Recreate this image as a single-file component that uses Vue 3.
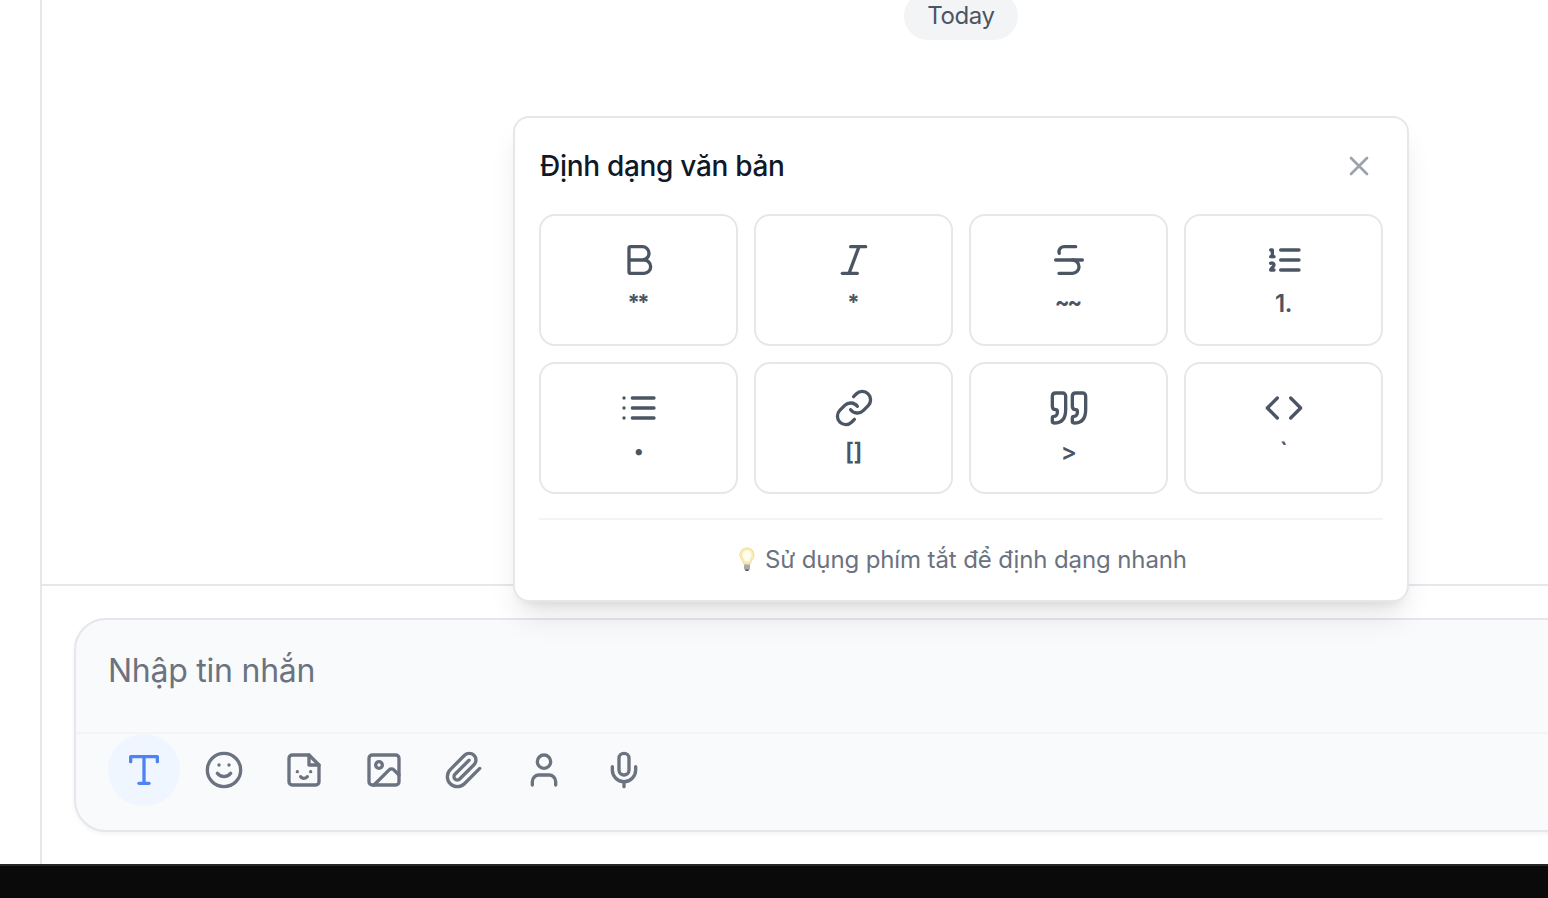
<script setup>
const formats = [
  { label: '**', tight: true, paths: ['M6 12h9a4 4 0 0 1 0 8H7a1 1 0 0 1-1-1V5a1 1 0 0 1 1-1h7a4 4 0 0 1 0 8'] },
  { label: '*', tight: true, paths: ['M19 4h-9', 'M14 20H5', 'M15 4L9 20'] },
  { label: '~~', tight: true, paths: ['M16 4H9a3 3 0 0 0-2.83 4', 'M14 12a4 4 0 0 1 0 8H6', 'M4 12h16'] },
  { label: '1.', paths: ['M10 6h11', 'M10 12h11', 'M10 18h11', 'M4 6h1v4', 'M4 10h2', 'M6 18H4c0-1 2-2 2-3s-1-1.5-2-1'] },
  { label: '•', dot: true, paths: ['M3 6h.01', 'M3 12h.01', 'M3 18h.01', 'M8 6h13', 'M8 12h13', 'M8 18h13'] },
  { label: '[]', paths: ['M10 13a5 5 0 0 0 7.54.54l3-3a5 5 0 0 0-7.07-7.07l-1.72 1.71', 'M14 11a5 5 0 0 0-7.54-.54l-3 3a5 5 0 0 0 7.07 7.07l1.71-1.71'] },
  { label: '>', paths: ['M3 21c3 0 7-1 7-8V5c0-1.25-.756-2.017-2-2H4c-1.25 0-2 .75-2 1.972V11c0 1.25.75 2 2 2 1 0 1 0 1 1v1c0 1-1 2-2 2s-1 .008-1 1.031V20c0 1 0 1 1 1z', 'M15 21c3 0 7-1 7-8V5c0-1.25-.757-2.017-2-2h-4c-1.25 0-2 .75-2 1.972V11c0 1.25.75 2 2 2 1 0 1 0 1 1v1c0 1-1 2-2 2s-1 .008-1 1.031V20c0 1 0 1 1 1z'] },
  { label: '`', paths: ['M16 18l6-6-6-6', 'M8 6l-6 6 6 6'] },
]
const tools = [
  { name: 'text', active: true, paths: ['M4 7V4h16v3', 'M9 20h6', 'M12 4v16'] },
  { name: 'emoji', paths: ['M22 12a10 10 0 1 1-20 0a10 10 0 1 1 20 0', 'M8 14s1.5 2 4 2 4-2 4-2', 'M9 9h.01', 'M15 9h.01'] },
  { name: 'sticker', paths: ['M15 3H5a2 2 0 0 0-2 2v14a2 2 0 0 0 2 2h14a2 2 0 0 0 2-2V9z', 'M15 3v6h6', 'M8 13h.01', 'M16 13h.01', 'M10 16s.8 1 2 1c1.3 0 2-1 2-1'] },
  { name: 'image', paths: ['M5 3h14a2 2 0 0 1 2 2v14a2 2 0 0 1-2 2H5a2 2 0 0 1-2-2V5a2 2 0 0 1 2-2z', 'M11 9a2 2 0 1 1-4 0a2 2 0 1 1 4 0', 'M21 15l-3.086-3.086a2 2 0 0 0-2.828 0L6 21'] },
  { name: 'file', paths: ['M21.44 11.05l-9.19 9.19a6 6 0 0 1-8.49-8.49l8.57-8.57A4 4 0 1 1 18 8.84l-8.59 8.57a2 2 0 0 1-2.83-2.83l8.49-8.48'] },
  { name: 'contact', paths: ['M19 21v-2a4 4 0 0 0-4-4H9a4 4 0 0 0-4 4v2', 'M16 7a4 4 0 1 1-8 0a4 4 0 1 1 8 0'] },
  { name: 'voice', paths: ['M12 2a3 3 0 0 0-3 3v7a3 3 0 0 0 6 0V5a3 3 0 0 0-3-3Z', 'M19 10v2a7 7 0 0 1-14 0v-2', 'M12 19v3'] },
]
</script>

<template>
  <div class="screen">
    <div class="body">
      <aside class="rail"></aside>
      <main class="chat">
        <section class="messages"><span class="day">Today</span></section>
        <footer class="footer">
          <div class="composer">
            <div class="placeholder">Nhập tin nhắn</div>
            <div class="toolbar">
              <button v-for="t in tools" :key="t.name" class="tool" :class="{ active: t.active }">
                <svg class="icon" viewBox="0 0 24 24"><path v-for="p in t.paths" :key="p" :d="p" /></svg>
              </button>
            </div>
          </div>
        </footer>
      </main>
    </div>
    <div class="bottom"></div>

    <div class="popover">
      <header class="head">
        <h3 class="title">Định dạng văn bản</h3>
        <button class="close"><svg class="icon small" viewBox="0 0 24 24"><path d="M18 6L6 18M6 6l12 12" /></svg></button>
      </header>
      <div class="grid">
        <button v-for="f in formats" :key="f.label" class="format">
          <svg class="icon" viewBox="0 0 24 24"><path v-for="p in f.paths" :key="p" :d="p" /></svg>
          <span class="label" :class="{ tight: f.tight, dot: f.dot }">{{ f.label }}</span>
        </button>
      </div>
      <div class="hint">
        <svg class="bulb" viewBox="0 0 16 26">
          <path class="glass" d="M8 1C3.8 1 1 4 1 7.800c0 3.800 3.200 5.700 3.700 9.200h6.600c.5-3.500 3.700-5.400 3.700-9.200C15 4 12.200 1 8 1z" />
          <path class="shine" d="M8 3.500C5 3.500 3.500 6 3.500 8c0 2 2 4 2.500 6h4c.5-2 2.500-4 2.500-6c0-2-1.500-4.500-4.500-4.500z" />
          <path class="base" d="M5 17.500h6v4L9.500 24h-3L5 21.500z" />
          <path class="tip" d="M6 22.500h4l-1 1.500H7z" />
        </svg>
        <span class="hint-text">Sử dụng phím tắt để định dạng nhanh</span>
      </div>
    </div>
  </div>
</template>

<style>
body { margin: 0; overflow: hidden; }
</style>

<style scoped>
* { box-sizing: border-box; }
.screen {
  position: relative;
  display: flex;
  flex-direction: column;
  width: 1548px;
  height: 898px;
  overflow: hidden;
  background: #fff;
  font-family: Inter, "Liberation Sans", sans-serif;
}
button { margin: 0; padding: 0; border: 0; background: none; font: inherit; color: inherit; }
.body { flex: 1; display: flex; min-height: 0; }
.rail { width: 42px; flex: none; border-right: 2px solid #e5e7eb; }
.chat { flex: 1; min-width: 0; display: flex; flex-direction: column; }
.messages { flex: 1; display: flex; justify-content: center; align-items: flex-start; padding-left: 332px; }
.day {
  width: 114px;
  height: 48px;
  margin-top: -8px;
  border-radius: 24px;
  background: #f3f4f6;
  color: #4b5563;
  font-size: 24px;
  line-height: 48px;
  letter-spacing: -0.4px;
  text-align: center;
}
.footer { height: 280px; padding: 32px 0 32px 32px; border-top: 2px solid #e5e7eb; }
.composer {
  width: 1600px;
  height: 214px;
  border: 2px solid #e5e7eb;
  border-radius: 32px;
  background: #f9fafb;
  box-shadow: 0 2px 4px rgba(0, 0, 0, 0.05);
}
.placeholder {
  height: 112px;
  padding: 26px 32px;
  font-size: 32px;
  line-height: 50px;
  letter-spacing: -0.25px;
  color: #6b7280;
}
.toolbar { display: flex; gap: 8px; padding: 0 32px; border-top: 2px solid #f3f4f6; }
.tool { width: 72px; height: 72px; display: flex; align-items: center; justify-content: center; border-radius: 50%; color: #6b7280; }
.tool.active { background: #eff6ff; color: #4f83f1; }
.icon { width: 40px; height: 40px; display: block; fill: none; stroke: currentColor; stroke-width: 2; stroke-linecap: round; stroke-linejoin: round; }
.small { width: 32px; height: 32px; }
.bottom { height: 34px; flex: none; background: #0a0a0a; border-top: 2px solid #262626; }
.popover {
  position: absolute;
  left: 513px;
  top: 116px;
  width: 896px;
  height: 486px;
  padding: 24px;
  border: 2px solid #e5e7eb;
  border-radius: 16px;
  background: #fff;
  box-shadow: 0 20px 30px -6px rgba(0, 0, 0, 0.1), 0 8px 12px -8px rgba(0, 0, 0, 0.1);
}
.head { display: flex; align-items: center; justify-content: space-between; height: 48px; margin-bottom: 24px; }
.title { margin: 0; padding-left: 1px; color: #111827; font-size: 28px; font-weight: 540; line-height: 40px; letter-spacing: -0.3px; white-space: nowrap; }
.close { width: 48px; height: 48px; display: flex; align-items: center; justify-content: center; color: #9ca3af; }
.grid { display: grid; grid-template-columns: repeat(4, 1fr); gap: 16px; }
.format { height: 132px; display: flex; flex-direction: column; align-items: center; padding-top: 24px; gap: 8px; border: 2px solid #e5e7eb; border-radius: 16px; color: #4b5563; }
.label { font-size: 24px; line-height: 32px; font-weight: 600; letter-spacing: -0.5px; }
.tight { font-size: 22px; font-weight: 700; line-height: 29px; letter-spacing: -2.4px; padding-right: 2.4px; }
.dot { font-size: 20px; line-height: 31px; }
.hint { display: flex; align-items: center; justify-content: center; gap: 10px; height: 58px; margin-top: 24px; padding: 24px 0 0 4px; border-top: 2px solid #f3f4f6; color: #6b7280; }
.hint-text { font-size: 24px; line-height: 32px; letter-spacing: -0.12px; white-space: nowrap; }
.bulb { width: 16px; height: 26px; flex: none; }
.glass { fill: #fbedb0; stroke: #efdc9a; stroke-width: 1; }
.shine { fill: #fffdf0; }
.base { fill: #aaa9ac; }
.tip { fill: #555; }
</style>
